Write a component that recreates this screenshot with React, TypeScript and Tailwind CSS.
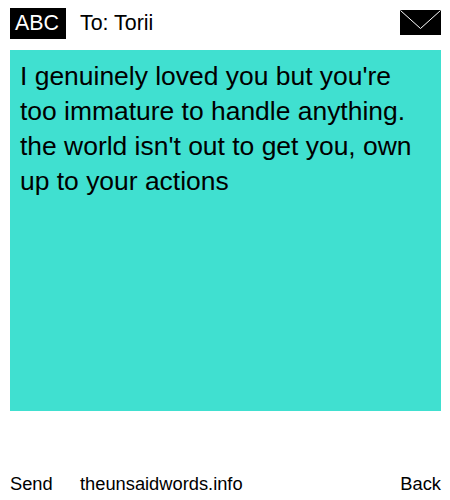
export default function App() {
  return (
    <div className="w-[450px] h-[500px] bg-white text-black flex flex-col pl-[10px] pr-[9px] font-['Liberation_Sans',Arial,sans-serif]">
      <header className="h-[50px] flex items-start">
        <div className="mt-[8px] w-[56px] h-[31px] pr-[2px] bg-black text-white text-[21.4px] leading-[31px] text-center">ABC</div>
        <div className="mt-[8px] ml-[14px] text-[21.4px] leading-[31px]">To: Torii</div>
        <svg className="ml-auto mt-[10px]" width="41" height="25" viewBox="0 0 41 25">
          <rect width="41" height="25" fill="#000" />
          <path d="M0.5 0.5 L20.5 18.5 L40.5 0.5" fill="none" stroke="#fff" strokeWidth="1" />
        </svg>
      </header>
      <main className="h-[361px] bg-[#40e0d0] px-[10px] pt-[9px] text-[26.45px] leading-[35px]">
        I genuinely loved you but you're too immature to handle anything. the world isn't out to get you, own up to your actions
      </main>
      <footer className="mt-[61px] flex text-[18.3px] leading-[24px]">
        <span className="w-[70px]">Send</span>
        <span>theunsaidwords.info</span>
        <span className="ml-auto">Back</span>
      </footer>
    </div>
  );
}
